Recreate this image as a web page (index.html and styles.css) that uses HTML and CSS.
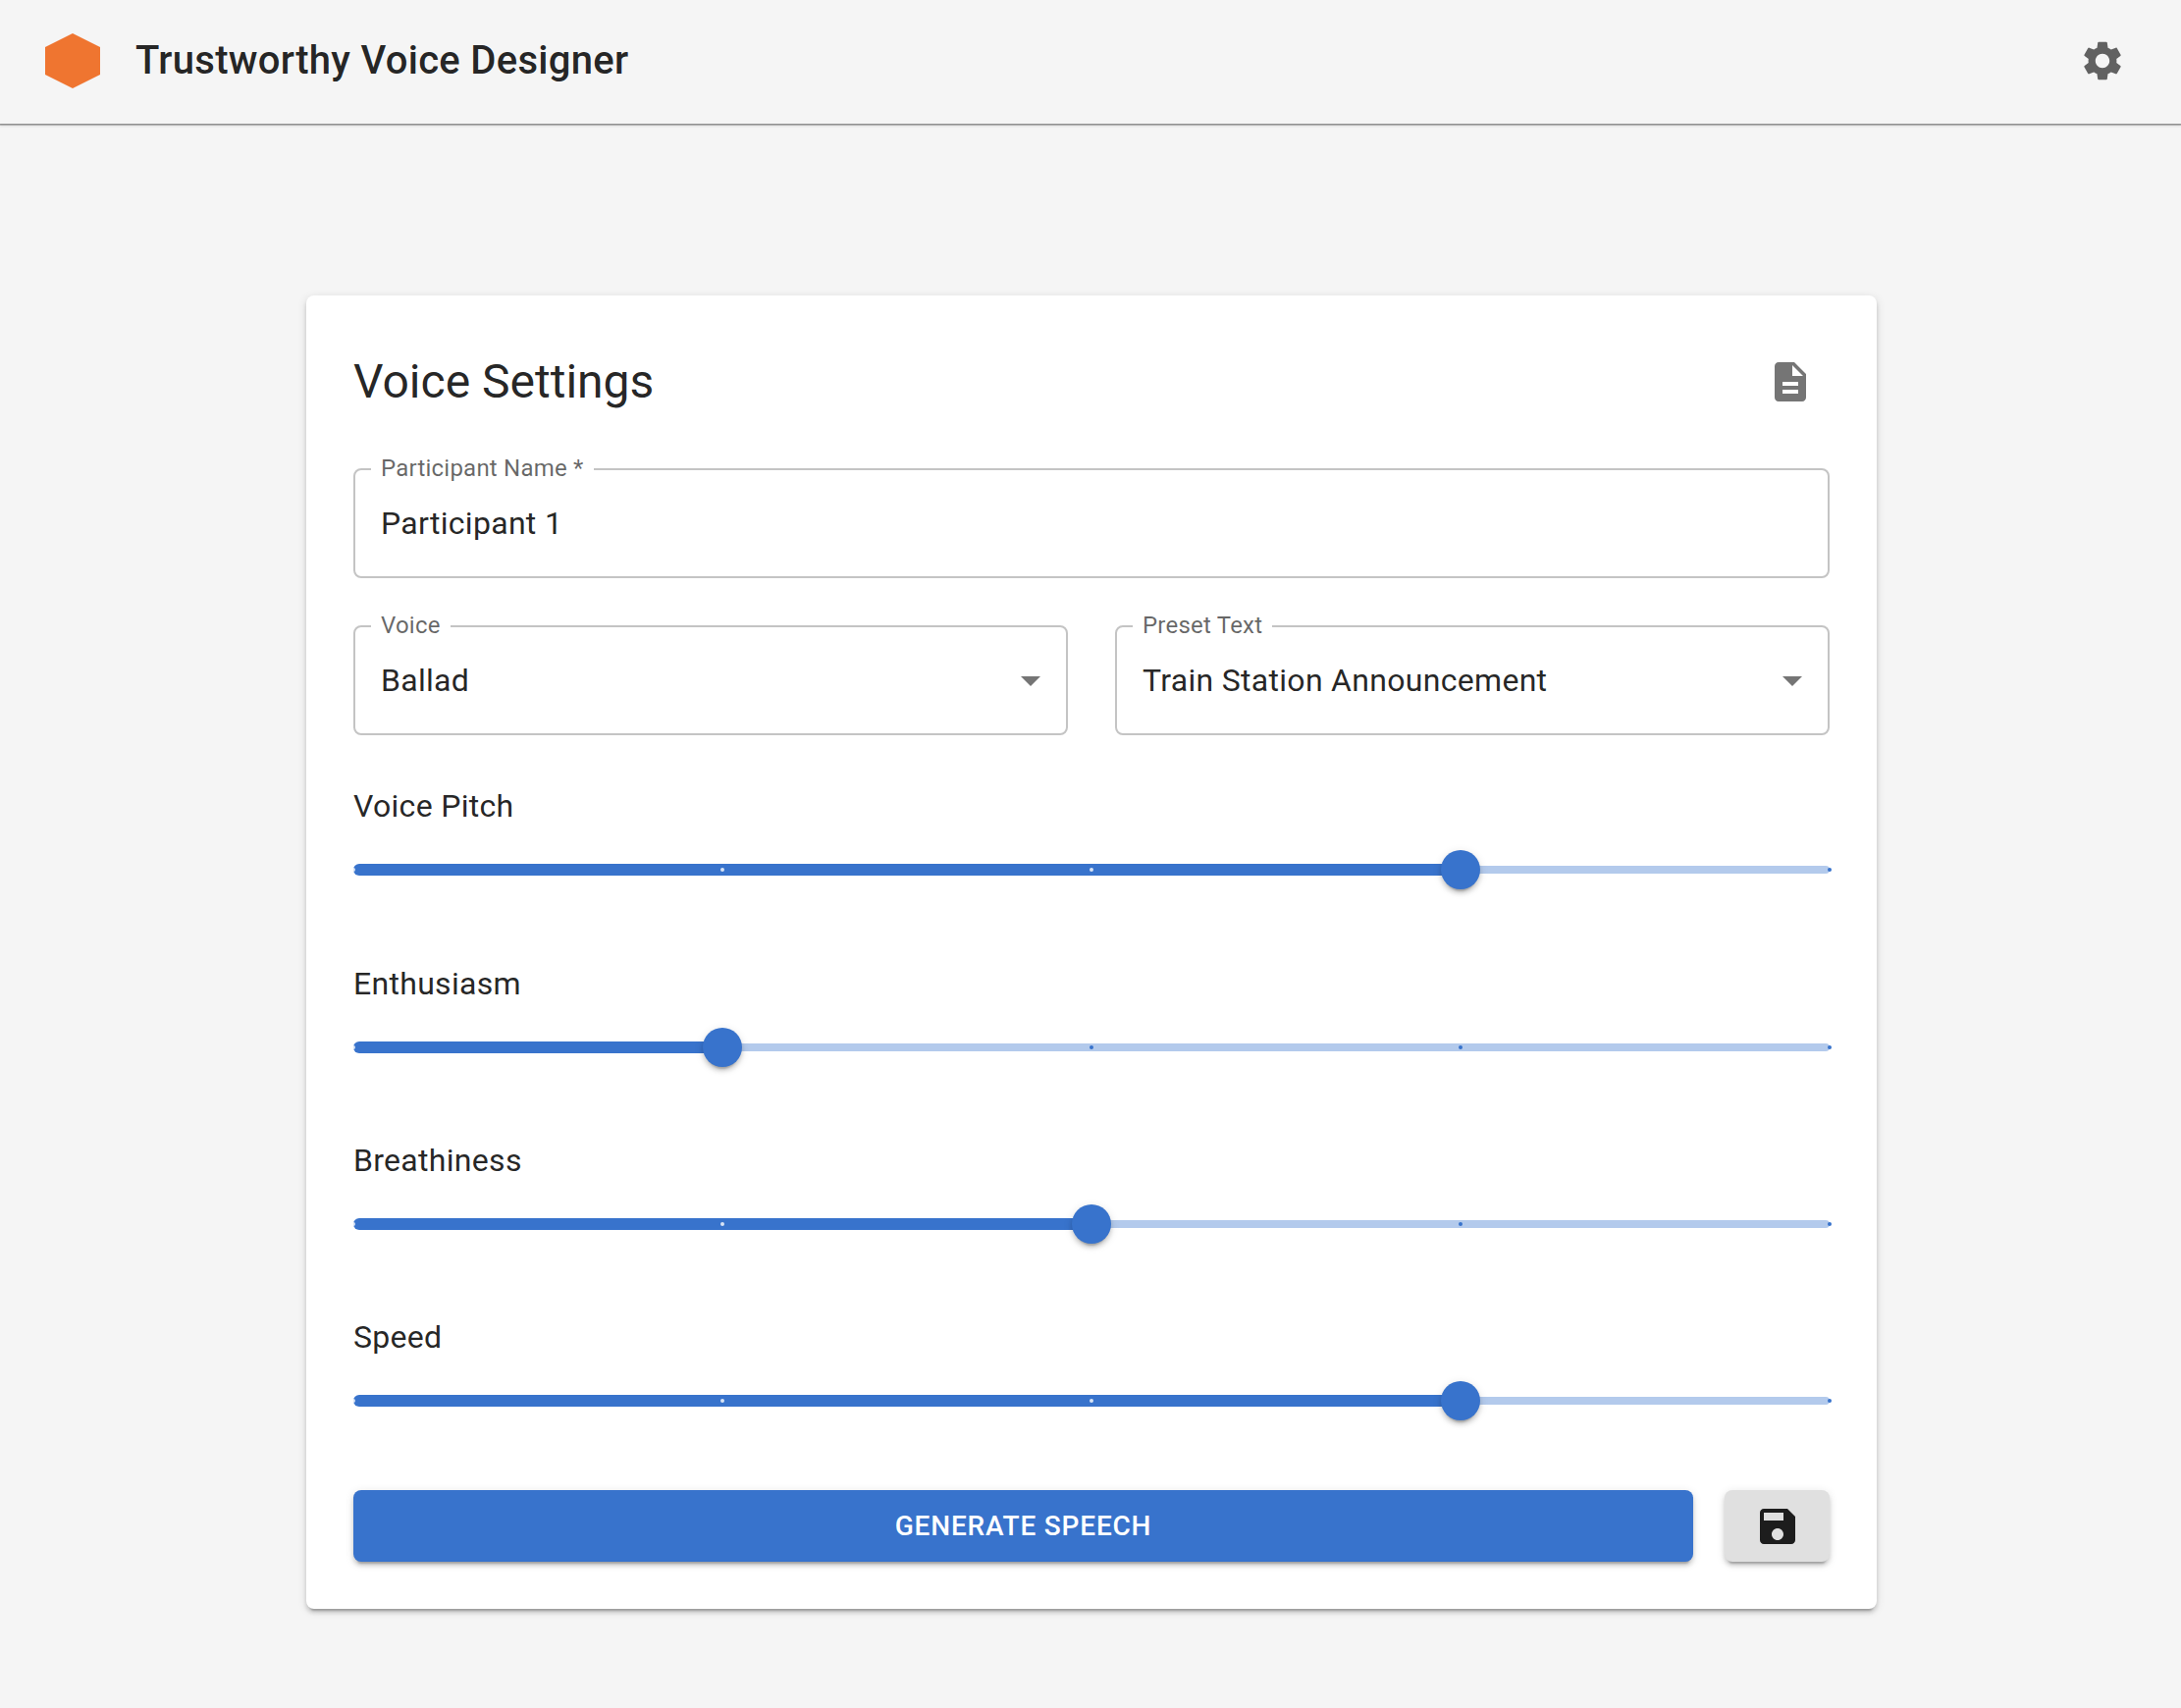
FILE: index.html
```html
<!DOCTYPE html>
<html lang="en">
<head>
	<meta charset="UTF-8">
	<title>Trustworthy Voice Designer</title>
	<link rel="stylesheet" href="styles.css">
</head>
<body>
	<header class="appbar">
		<div class="logo"></div>
		<h1 class="app-title">Trustworthy Voice Designer</h1>
		<button class="icon-btn settings-btn" aria-label="Settings">
			<svg class="icon" viewBox="0 0 24 24"><path d="M19.14 12.94c.04-.3.06-.61.06-.94 0-.32-.02-.64-.07-.94l2.03-1.58c.18-.14.23-.41.12-.61l-1.92-3.32c-.12-.22-.37-.29-.59-.22l-2.39.96c-.5-.38-1.03-.7-1.62-.94l-.36-2.54c-.04-.24-.24-.41-.48-.41h-3.84c-.24 0-.43.17-.47.41l-.36 2.54c-.59.24-1.13.57-1.62.94l-2.39-.96c-.22-.08-.47 0-.59.22L2.74 8.87c-.12.21-.08.47.12.61l2.03 1.58c-.05.3-.09.63-.09.94s.02.64.07.94l-2.03 1.58c-.18.14-.23.41-.12.61l1.92 3.32c.12.22.37.29.59.22l2.39-.96c.5.38 1.03.7 1.62.94l.36 2.54c.05.24.24.41.48.41h3.84c.24 0 .44-.17.47-.41l.36-2.54c.59-.24 1.13-.56 1.62-.94l2.39.96c.22.08.47 0 .59-.22l1.92-3.32c.12-.22.07-.47-.12-.61l-2.01-1.58zM12 15.6c-1.98 0-3.6-1.62-3.6-3.6s1.62-3.6 3.6-3.6 3.6 1.62 3.6 3.6-1.62 3.6-3.6 3.6z"/></svg>
		</button>
	</header>

	<main class="page">
		<section class="card">
			<div class="card-head">
				<h2 class="card-title">Voice Settings</h2>
				<button class="icon-btn doc-btn" aria-label="Notes">
					<svg class="icon" viewBox="0 0 24 24"><path d="M14 2H6c-1.1 0-1.99.9-1.99 2L4 20c0 1.1.89 2 1.99 2H18c1.1 0 2-.9 2-2V8l-6-6zm2 16H8v-2h8v2zm0-4H8v-2h8v2zm-3-5V3.5L18.5 9H13z"/></svg>
				</button>
			</div>

			<div class="field">
				<span class="field-label">Participant Name&nbsp;*</span>
				<div class="field-value">Participant 1</div>
			</div>

			<div class="field-row">
				<div class="field">
					<span class="field-label">Voice</span>
					<div class="field-value">Ballad</div>
					<svg class="icon arrow" viewBox="0 0 24 24"><path d="M7 10l5 5 5-5z"/></svg>
				</div>
				<div class="field">
					<span class="field-label">Preset Text</span>
					<div class="field-value">Train Station Announcement</div>
					<svg class="icon arrow" viewBox="0 0 24 24"><path d="M7 10l5 5 5-5z"/></svg>
				</div>
			</div>

			<div class="sliders">
				<div class="slider-group">
					<div class="slider-label">Voice Pitch</div>
					<div class="slider">
						<div class="rail"></div>
						<div class="fill" style="width:75%"></div>
						<i class="tick on" style="left:0%"></i>
						<i class="tick on" style="left:25%"></i>
						<i class="tick on" style="left:50%"></i>
						<i class="tick" style="left:100%"></i>
						<div class="thumb" style="left:75%"></div>
					</div>
				</div>
				<div class="slider-group">
					<div class="slider-label">Enthusiasm</div>
					<div class="slider">
						<div class="rail"></div>
						<div class="fill" style="width:25%"></div>
						<i class="tick on" style="left:0%"></i>
						<i class="tick" style="left:50%"></i>
						<i class="tick" style="left:75%"></i>
						<i class="tick" style="left:100%"></i>
						<div class="thumb" style="left:25%"></div>
					</div>
				</div>
				<div class="slider-group">
					<div class="slider-label">Breathiness</div>
					<div class="slider">
						<div class="rail"></div>
						<div class="fill" style="width:50%"></div>
						<i class="tick on" style="left:0%"></i>
						<i class="tick on" style="left:25%"></i>
						<i class="tick" style="left:75%"></i>
						<i class="tick" style="left:100%"></i>
						<div class="thumb" style="left:50%"></div>
					</div>
				</div>
				<div class="slider-group">
					<div class="slider-label">Speed</div>
					<div class="slider">
						<div class="rail"></div>
						<div class="fill" style="width:75%"></div>
						<i class="tick on" style="left:0%"></i>
						<i class="tick on" style="left:25%"></i>
						<i class="tick on" style="left:50%"></i>
						<i class="tick" style="left:100%"></i>
						<div class="thumb" style="left:75%"></div>
					</div>
				</div>
			</div>

			<div class="actions">
				<button class="btn btn-generate">Generate Speech</button>
				<button class="btn btn-save" aria-label="Save">
					<svg class="icon" viewBox="0 0 24 24"><path d="M17 3H5c-1.11 0-2 .9-2 2v14c0 1.1.89 2 2 2h14c1.1 0 2-.9 2-2V7l-4-4zm-5 16c-1.66 0-3-1.34-3-3s1.34-3 3-3 3 1.34 3 3-1.34 3-3 3zm3-10H5V5h10v4z"/></svg>
				</button>
			</div>
		</section>
	</main>
</body>
</html>
```

FILE: styles.css
```css
* {
	box-sizing: border-box;
}
html, body {
	margin: 0;
	padding: 0;
	min-height: 100%;
}
body {
	background: #f5f5f5;
	color: rgba(0,0,0,.87);
	font-family: Roboto, "Liberation Sans", sans-serif;
	font-size: 32px;
}
button {
	font-family: inherit;
	border: 0;
	padding: 0;
	cursor: pointer;
}
.icon {
	display: block;
	width: 48px;
	height: 48px;
	fill: currentColor;
}

/* app bar */
.appbar {
	display: flex;
	align-items: center;
	height: 126px;
	padding: 0 56px 2px 46px;
	background: #f5f5f5;
	box-shadow: 0 1px 0 rgba(0,0,0,.2), 0 2px 0 rgba(0,0,0,.2), 0 3px 2px rgba(0,0,0,.08);
}
.logo {
	width: 56px;
	height: 56px;
	margin-right: 36px;
	background: #ef7530;
	clip-path: polygon(50% 0, 100% 25%, 100% 75%, 50% 100%, 0 75%, 0 25%);
}
.app-title {
	margin: 0;
	flex: 1;
	font-size: 40px;
	font-weight: 500;
	letter-spacing: .3px;
	line-height: 60px;
}
.icon-btn {
	background: none;
	color: #616161;
}

/* card */
.page {
	display: flex;
	justify-content: center;
	padding: 175px 0 100px 2px;
}
.card {
	width: 1600px;
	padding: 48px;
	background: #fff;
	border-radius: 8px;
	box-shadow: 0 6px 2px -4px rgba(0,0,0,.2), 0 4px 4px rgba(0,0,0,.14), 0 2px 10px rgba(0,0,0,.12);
}
.card-head {
	display: flex;
	align-items: center;
	justify-content: space-between;
	height: 80px;
	margin-bottom: 48px;
}
.card-title {
	margin: 0;
	font-size: 48px;
	font-weight: 400;
	line-height: 72px;
}
.doc-btn {
	padding: 16px;
	color: #757575;
}

/* outlined fields */
.field {
	position: relative;
	display: flex;
	align-items: center;
	height: 112px;
	padding: 0 26px;
	border: 2px solid #c4c4c4;
	border-radius: 8px;
}
.field-label {
	position: absolute;
	top: -16px;
	left: 16px;
	padding: 0 10px;
	background: #fff;
	color: rgba(0,0,0,.6);
	font-size: 24px;
	line-height: 28px;
	letter-spacing: .22px;
}
.field-value {
	flex: 1;
	letter-spacing: .3px;
	line-height: 46px;
}
.arrow {
	position: absolute;
	right: 12px;
	top: 30px;
	color: #757575;
}
.field-row {
	display: grid;
	grid-template-columns: 1fr 1fr;
	gap: 48px;
	margin-top: 48px;
}

/* sliders */
.sliders {
	display: flex;
	flex-direction: column;
	gap: 52.33px;
	margin-top: 49.3px;
}
.slider-label {
	padding-bottom: 2px;
	line-height: 46px;
	letter-spacing: .3px;
}
.slider {
	position: relative;
	height: 80px;
}
.rail, .fill {
	position: absolute;
	left: 0;
	background: #3873cc;
}
.rail {
	top: 36px;
	width: 100%;
	height: 8px;
	border-radius: 4px;
	opacity: .38;
}
.fill {
	top: 34px;
	height: 12px;
	border-radius: 6px;
}
.tick {
	position: absolute;
	top: 38px;
	width: 4px;
	height: 4px;
	margin-left: -2px;
	border-radius: 50%;
	background: #3873cc;
}
.tick.on {
	background: rgba(255,255,255,.8);
}
.thumb {
	position: absolute;
	top: 20px;
	width: 40px;
	height: 40px;
	margin-left: -20px;
	border-radius: 50%;
	background: #3873cc;
	box-shadow: 0 6px 2px -4px rgba(0,0,0,.2), 0 4px 4px rgba(0,0,0,.14), 0 2px 10px rgba(0,0,0,.12);
}

/* buttons */
.actions {
	display: flex;
	gap: 32px;
	margin-top: 51px;
}
.btn {
	height: 73px;
	border-radius: 8px;
	box-shadow: 0 6px 2px -4px rgba(0,0,0,.2), 0 4px 4px rgba(0,0,0,.14), 0 2px 10px rgba(0,0,0,.12);
}
.btn-generate {
	flex: 1;
	background: #3873cc;
	color: #fff;
	font-size: 28px;
	font-weight: 500;
	letter-spacing: .8px;
	text-transform: uppercase;
}
.btn-save {
	display: flex;
	align-items: center;
	justify-content: center;
	width: 107px;
	background: #e0e0e0;
	color: rgba(0,0,0,.87);
}
```
